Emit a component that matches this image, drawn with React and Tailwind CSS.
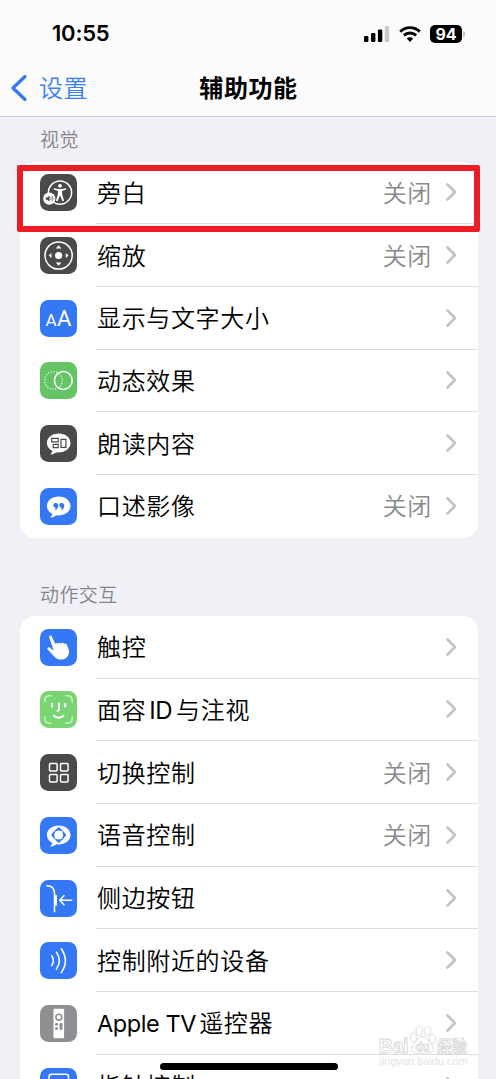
const Bubble = ({ children }) => (
  <>
    <path
      d="M18.7 8.6c6.6 0 11.8 4.1 11.8 9.4s-5.200 9.400-11.800 9.400c-.8 0-1.600-.1-2.300-.2-1.300 1.200-3.300 2.200-5.400 2.300-.5 0-.6-.5-.2-.8.9-.8 1.400-1.800 1.500-2.900C9 24.300 6.900 21.400 6.900 18c0-5.300 5.200-9.400 11.800-9.400z"
      fill="#fff"
    />
    {children}
  </>
)

const ICONS = {
  voiceover: (
    <>
      <circle cx="20" cy="18.600" r="11.600" fill="none" stroke="#fff" strokeWidth="1.500" />
      <circle cx="20" cy="11.800" r="1.900" fill="#fff" />
      <path
        d="M13.800 14.300l4.500.8h3.400l4.500-.8.2 1.300-4.400 1.500.2 3.400 1.900 6.300-1.600.5-2.300-5.600h-.4l-2.300 5.600-1.600-.5 1.900-6.300.2-3.400-4.400-1.500z"
        fill="#fff"
      />
      <circle cx="9.300" cy="24.600" r="6.100" fill="#fff" />
      <path d="M5.700 23.400h1.600l2.300-1.900v6.200l-2.300-1.900H5.700z" fill="#4a4a4a" />
      <path d="M10.700 23.200q1.100 1.400 0 2.800M12.100 22q1.900 2.600 0 5.200" fill="none" stroke="#4a4a4a" strokeWidth=".7" />
    </>
  ),
  zoom: (
    <>
      <circle cx="18.600" cy="18.500" r="13.600" fill="none" stroke="#fff" strokeWidth="1.500" />
      <circle cx="18.600" cy="18.500" r="3.600" fill="#fff" />
      <path
        d="M18.600 8.300l2.900 3.100h-5.800zM18.600 28.700l2.900-3.100h-5.800zM8.600 18.500l2.900-2.500v5zM28.600 18.500L25.700 16v5z"
        fill="#fff"
      />
    </>
  ),
  text: (
    <g fill="#fff" className="font-['Roboto',sans-serif] tracking-normal">
      <text x="5.600" y="26.200" fontSize="17">A</text>
      <text x="17" y="26.200" fontSize="22">A</text>
    </g>
  ),
  motion: (
    <g fill="none" stroke="#fff">
      <circle cx="13.500" cy="18.500" r="8.800" strokeWidth="1.300" strokeDasharray="1.100 1.660" />
      <circle cx="23.300" cy="18.500" r="8.900" strokeWidth="1.500" />
    </g>
  ),
  spoken: (
    <Bubble>
      <g fill="none" stroke="#4a4a4a" strokeWidth="1.200">
        <path d="M11.700 13.300h6.500v3.500h-6.500zM13.200 19.300h5v3.300h-5zM21 14.300h4.900v8H21z" />
      </g>
    </Bubble>
  ),
  described: (
    <Bubble>
      <g fill="#3478f6">
        <path d="M15.800 15.100a2.500 2.500 0 0 1 2.500 2.600c0 2-1.200 3.600-3 4.200l-.5-.8c.8-.4 1.300-.9 1.500-1.500a2.300 2.300 0 1 1-.5-4.500z" />
        <path d="M21.800 15.100a2.500 2.500 0 0 1 2.500 2.600c0 2-1.200 3.600-3 4.200l-.5-.8c.8-.4 1.300-.9 1.500-1.500a2.300 2.300 0 1 1-.5-4.500z" />
      </g>
    </Bubble>
  ),
  touch: (
    <path
      d="M9.200 8.200c-.5-1.600 1.900-2.500 2.600-.9l3.500 7.800c.2-1.300 2-1.500 2.700-.2.500-1.500 2.300-1.500 3-.1.700-1.400 2.500-1.200 3.100.3.900-1 2.300-.7 2.800.7l1.500 3.700c1.600 4.200 0 8.300-3.700 10.200-3.500 1.700-7.300.9-10.300-2l-6.700-7.200c-1.100-1.300.4-2.800 1.800-1.900l4.200 2.900z"
      fill="#fff"
    />
  ),
  face: (
    <g fill="none" stroke="#fff" strokeLinecap="round" strokeLinejoin="round">
      <path
        d="M4.800 11V9.500q0-4.700 4.700-4.700H11M26 4.800h1.500q4.700 0 4.700 4.700V11M32.200 26v1.500q0 4.700-4.700 4.700H26M11 32.200H9.500q-4.700 0-4.700-4.700V26"
        strokeWidth="1.500"
        opacity=".65"
      />
      <path d="M12 12.800v2.700M25 12.800v2.700" strokeWidth="2.200" />
      <path d="M19 12.500v6q0 1.400-1.500 1.400M13.700 24.500q4.900 4.600 9.800 0" strokeWidth="1.900" />
    </g>
  ),
  switch: (
    <g fill="none" stroke="#fff" strokeWidth="1.500">
      <rect x="9.500" y="9.500" width="7.600" height="7.600" rx="1" />
      <rect x="20.500" y="9.500" width="7.600" height="7.600" rx="1" />
      <rect x="9.500" y="20.500" width="7.600" height="7.600" rx="1" />
      <rect x="20.500" y="20.500" width="7.600" height="7.600" rx="1" />
    </g>
  ),
  voice: (
    <Bubble>
      <path
        d="M18.700 10l5 4.500h-10zM18.700 26l5-4.500h-10zM11 18l4.300-5v10zM26.400 18l-4.300-5v10z"
        fill="#3478f6"
      />
      <circle cx="18.700" cy="18" r="4.500" fill="#fff" />
    </Bubble>
  ),
  side: (
    <g fill="none" stroke="#fff" strokeLinecap="round" strokeLinejoin="round">
      <path d="M6.800 5.700c5.200 0 7.700 2.500 7.700 7.600v18.500" strokeWidth="1.500" />
      <path d="M16 15.700v9.200" strokeWidth="1.900" />
      <path d="M31.700 20.200H20.200M24 15.700l-4.300 4.500 4.300 4.500" strokeWidth="1.500" />
    </g>
  ),
  nearby: (
    <g fill="none" stroke="#fff" strokeWidth="1.600" strokeLinecap="round">
      <path d="M11.700 13.600q3.300 5 0 10M16.400 10.100q5.800 8.500 0 17M21.300 6.800q8.200 11.900 0 23.800" />
    </g>
  ),
  remote: (
    <>
      <rect x="13.500" y="3.800" width="10.600" height="29.400" rx="1.200" fill="#fff" />
      <circle cx="18.800" cy="12.200" r="2.900" fill="none" stroke="#8e8e93" strokeWidth="1.600" />
      <g fill="#8e8e93">
        <circle cx="16.500" cy="19.200" r="1.500" />
        <circle cx="16.500" cy="23.400" r="1.500" />
        <circle cx="21" cy="19.200" r="1.500" />
        <rect x="19.500" y="19" width="3" height="5.900" rx="1.500" />
      </g>
    </>
  ),
  pointer: <rect x="9" y="6.200" width="19.500" height="24" rx="2.500" fill="none" stroke="#fff" strokeWidth="1.500" />
}

const VISION = [
  { icon: 'voiceover', color: 'bg-[#4a4a4a]', label: '旁白', value: '关闭' },
  { icon: 'zoom', color: 'bg-[#4a4a4a]', label: '缩放', value: '关闭' },
  { icon: 'text', color: 'bg-[#3478f6]', label: '显示与文字大小' },
  { icon: 'motion', color: 'bg-[#65c466]', label: '动态效果' },
  { icon: 'spoken', color: 'bg-[#4a4a4a]', label: '朗读内容' },
  { icon: 'described', color: 'bg-[#3478f6]', label: '口述影像', value: '关闭' }
]

const MOTOR = [
  { icon: 'touch', color: 'bg-[#3478f6]', label: '触控' },
  {
    icon: 'face',
    color: 'bg-[#78d572]',
    label: (
      <>
        面容<span className="mr-[4px] ml-[3px] font-normal tracking-[-0.500px]">ID</span>与注视
      </>
    )
  },
  { icon: 'switch', color: 'bg-[#4a4a4a]', label: '切换控制', value: '关闭' },
  { icon: 'voice', color: 'bg-[#3478f6]', label: '语音控制', value: '关闭' },
  { icon: 'side', color: 'bg-[#3478f6]', label: '侧边按钮' },
  { icon: 'nearby', color: 'bg-[#3478f6]', label: '控制附近的设备' },
  {
    icon: 'remote',
    color: 'bg-[#8e8e93]',
    label: (
      <>
        <span className="mr-[3px] text-[23.500px] font-normal tracking-[-0.400px]">Apple TV</span>遥控器
      </>
    )
  },
  { icon: 'pointer', color: 'bg-[#3478f6]', label: '指针控制' }
]

function Row({ icon, color, label, value }) {
  return (
    <li className="group flex h-[62.700px] pl-5">
      <div className="flex w-14 shrink-0 items-center">
        <svg viewBox="0 0 37 37" className={`size-[37px] rounded-[8.500px] ${color}`}>
          {ICONS[icon]}
        </svg>
      </div>
      <div className="flex flex-1 items-center border-b border-[#dcdcdf] pr-[21px] pl-px text-2xl font-[350] tracking-[0.650px] whitespace-nowrap group-last:border-transparent">
        <span className="flex-1 pt-[3px] text-black">{label}</span>
        {value && <span className="mr-[13px] pt-[3px] text-[#89898d]">{value}</span>}
        <svg viewBox="0 0 12 20" className="h-5 w-3" fill="none" stroke="#c3c3c6" strokeWidth="2.600" strokeLinecap="round" strokeLinejoin="round">
          <path d="M2.500 2.500l7.500 7.500-7.500 7.500" />
        </svg>
      </div>
    </li>
  )
}

function Group({ rows }) {
  return (
    <ul className="mr-[18px] ml-5 overflow-hidden rounded-[15px] bg-white">
      {rows.map((row) => (
        <Row key={row.icon} {...row} />
      ))}
    </ul>
  )
}

function StatusBar() {
  return (
    <div className="flex h-[60px] items-center justify-between pt-[7px] pr-[31px] pl-[52px]">
      <span className="text-[22px] font-semibold tracking-[-0.200px]">10:55</span>
      <div className="flex items-center gap-[9px]">
        <svg viewBox="0 0 26 16" className="h-4 w-[26px]">
          <rect x="0" y="10" width="4.400" height="6" rx="1.200" />
          <rect x="7" y="7" width="4.400" height="9" rx="1.200" />
          <rect x="13.900" y="3.500" width="4.400" height="12.500" rx="1.200" />
          <rect x="20.800" y="0" width="4.400" height="16" rx="1.200" fill="#c9c9ca" />
        </svg>
        <svg viewBox="0 0 22 16" className="h-4 w-[22px]" fill="none" stroke="#000" strokeWidth="2.900">
          <path d="M1.200 5.600c5.600-5.300 14-5.300 19.600 0M4.900 9.400c3.500-3.300 8.700-3.300 12.200 0" />
          <path d="M11 15.900l-3.300-3.300c1.900-1.700 4.700-1.700 6.600 0z" fill="#000" stroke="none" />
        </svg>
        <div className="flex items-center gap-px">
          <span className="flex h-[18px] w-[32px] items-center justify-center rounded-[5px] bg-black text-[16px] font-bold text-white">94</span>
          <span className="h-1.5 w-[2px] rounded-r bg-[#c4c4c6]" />
        </div>
      </div>
    </div>
  )
}

function Watermark() {
  return (
    <svg viewBox="0 0 92 48" className="absolute top-[1022px] left-[377px] h-12 w-[92px]">
      <g fill="#fff" stroke="#d6d6d8" strokeWidth=".8" className="font-['Liberation_Sans','Noto_Sans_CJK_SC',sans-serif] font-bold">
        <text x="1.500" y="31" fontSize="20" textLength="30">Bai</text>
        <ellipse cx="36.500" cy="15.500" rx="3.200" ry="4.300" />
        <ellipse cx="42.300" cy="8.800" rx="3.300" ry="4.500" />
        <ellipse cx="50.500" cy="9" rx="3.300" ry="4.500" />
        <ellipse cx="55.700" cy="17" rx="3.200" ry="4.300" />
        <path d="M46 14.500c4 0 5 4 8 7s3.500 9.500-2 9.500H39c-6-1-5-7-2-10 4-3 5-6.500 9-6.500z" />
        <text x="38.500" y="29" fontSize="12" textLength="14" lengthAdjust="spacingAndGlyphs">du</text>
        <text x="60" y="30" fontSize="16" textLength="30" lengthAdjust="spacingAndGlyphs">经验</text>
      </g>
      <text x="2.500" y="43" fontSize="10" textLength="88" lengthAdjust="spacingAndGlyphs" fill="#e4e4e6" className="font-['Liberation_Sans',sans-serif]">
        jingyan.baidu.com
      </text>
    </svg>
  )
}

export default function App() {
  return (
    <div className="relative h-[1079px] w-[496px] overflow-hidden bg-[#f1f0f6] font-['Inter','Noto_Sans_CJK_SC',sans-serif] text-black">
      <header className="h-[117px] border-b border-[#cececf] bg-[#fcfcfd]">
        <StatusBar />
        <nav className="grid h-14 grid-cols-[1fr_auto_1fr] items-center pl-2.5 text-2xl tracking-[0.600px]">
          <a className="flex items-center gap-3 text-[#3880f7]">
            <svg viewBox="0 0 17 28" className="h-7 w-[17px]" fill="none" stroke="#3478f6" strokeWidth="3.200" strokeLinecap="round" strokeLinejoin="round">
              <path d="M15 2.500L3 14l12 11.500" />
            </svg>
            <span className="pt-0.5 font-[350]">设置</span>
          </a>
          <h1 className="mr-[9px] pt-0.5 font-bold">辅助功能</h1>
        </nav>
      </header>

      <main className="text-[#85858a]">
        <h2 className="h-[44.500px] pt-[10px] pl-10 text-[19px] leading-7 font-[350] tracking-[0.400px]">视觉</h2>
        <Group rows={VISION} />
        <h2 className="h-[78.300px] pt-[44px] pl-10 text-[19px] leading-7 font-[350] tracking-[0.400px]">动作交互</h2>
        <Group rows={MOTOR} />
      </main>

      {/* Highlight around the first row */}
      <div className="absolute top-[165px] left-[17px] h-[67px] w-[463px] rounded-[2px] border-6 border-[#ee1c25]" />

      <Watermark />

      {/* Home indicator */}
      <div className="absolute top-[1063px] left-[160px] h-[6.500px] w-[178px] rounded-full bg-black" />
    </div>
  )
}
